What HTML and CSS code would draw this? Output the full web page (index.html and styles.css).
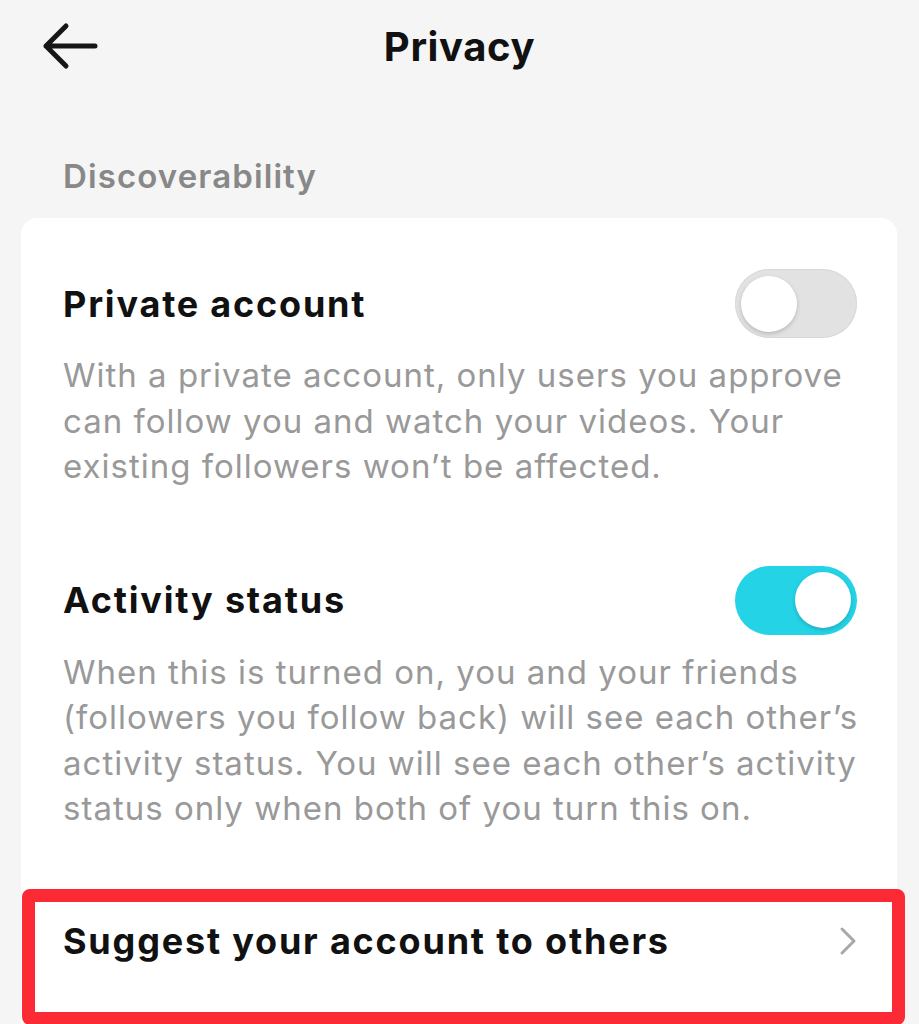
FILE: index.html
```html
<!DOCTYPE html>
<html lang="en">
<head>
    <meta charset="UTF-8">
    <meta name="viewport" content="width=device-width, initial-scale=1.0">
    <title>Privacy</title>
    <link rel="stylesheet" href="styles.css">
</head>
<body>

    <!-- Top bar -->
    <div class="topbar">
        <span class="back">
            <svg width="56" height="48" viewBox="0 0 56 48">
                <path d="M24 4 L4 24 L24 44 M4 24 H53" fill="none" stroke="#161616" stroke-width="5" stroke-linecap="round" stroke-linejoin="round"/>
            </svg>
        </span>
        <h1>Privacy</h1>
        <span></span>
    </div>

    <div class="section-label">Discoverability</div>

    <div class="card">
        <div class="setting">
            <div class="setting-head">
                <span class="setting-title">Private account</span>
                <span class="switch"><span class="knob"></span></span>
            </div>
            <p class="setting-desc">With a private account, only users you approve can follow you and watch your videos. Your existing followers won’t be affected.</p>
        </div>

        <div class="setting">
            <div class="setting-head">
                <span class="setting-title">Activity status</span>
                <span class="switch on"><span class="knob"></span></span>
            </div>
            <p class="setting-desc">When this is turned on, you and your friends (followers you follow back) will see each other’s activity status. You will see each other’s activity status only when both of you turn this on.</p>
        </div>

        <div class="link-row">
            <span class="setting-title">Suggest your account to others</span>
            <svg class="chevron" width="18" height="30" viewBox="0 0 18 30">
                <path d="M3 3 L15 15 L3 27" fill="none" stroke="#a8a8a8" stroke-width="3" stroke-linecap="round" stroke-linejoin="round"/>
            </svg>
        </div>
    </div>

</body>
</html>
```

FILE: styles.css
```css
body {
    margin: 0;
    background-color: #f5f5f5;
    font-family: Inter, "Noto Sans", sans-serif;
    overflow: hidden;
}
.topbar {
    display: grid;
    grid-template-columns: 1fr auto 1fr;
    align-items: center;
    height: 92px;
    padding: 0 42px;
}
.back {
    display: flex;
    align-items: center;
}
.topbar h1 {
    margin: 0;
    font-size: 40px;
    font-weight: 700;
    letter-spacing: 0.6px;
    color: #111;
}
.section-label {
    padding: 64px 0 0 63px;
    height: 62px;
    font-size: 33px;
    font-weight: 600;
    letter-spacing: 1.1px;
    color: #888;
}
.card {
    background: white;
    margin: 0 22px 0 21px;
    border-radius: 16px;
    padding: 51px 40px 0 42px;
    height: 900px;
}
.setting + .setting {
    margin-top: 76px;
}
.setting-head {
    display: flex;
    justify-content: space-between;
    align-items: center;
    height: 69px;
}
.setting-title {
    font-size: 36px;
    font-weight: 700;
    letter-spacing: 1.8px;
    color: #111;
}
.setting-desc {
    margin: 15px -20px 0 0;
    font-size: 33px;
    line-height: 45.5px;
    letter-spacing: 1px;
    color: #999;
}
.switch {
    width: 122px;
    height: 69px;
    border-radius: 35px;
    background: #e2e2e2;
    box-shadow: inset 0 0 0 1px #d8d8d8;
    display: flex;
    align-items: center;
    padding: 0 6px;
    box-sizing: border-box;
}
.switch .knob {
    width: 56px;
    height: 56px;
    border-radius: 50%;
    background: white;
    box-shadow: 0 2px 4px rgba(0, 0, 0, 0.18);
}
.switch.on {
    background: #24d3e6;
    box-shadow: none;
    justify-content: flex-end;
}
.link-row {
    position: relative;
    display: flex;
    justify-content: space-between;
    align-items: center;
    margin: 57px -40px 0 -42px;
    padding: 30px 40px 0 42px;
    height: 44px;
}
.link-row::after {
    content: "";
    position: absolute;
    top: 0;
    left: 1px;
    right: -8px;
    height: 136px;
    border: 13px solid #fb2a35;
    border-radius: 8px;
    box-sizing: border-box;
}
```
